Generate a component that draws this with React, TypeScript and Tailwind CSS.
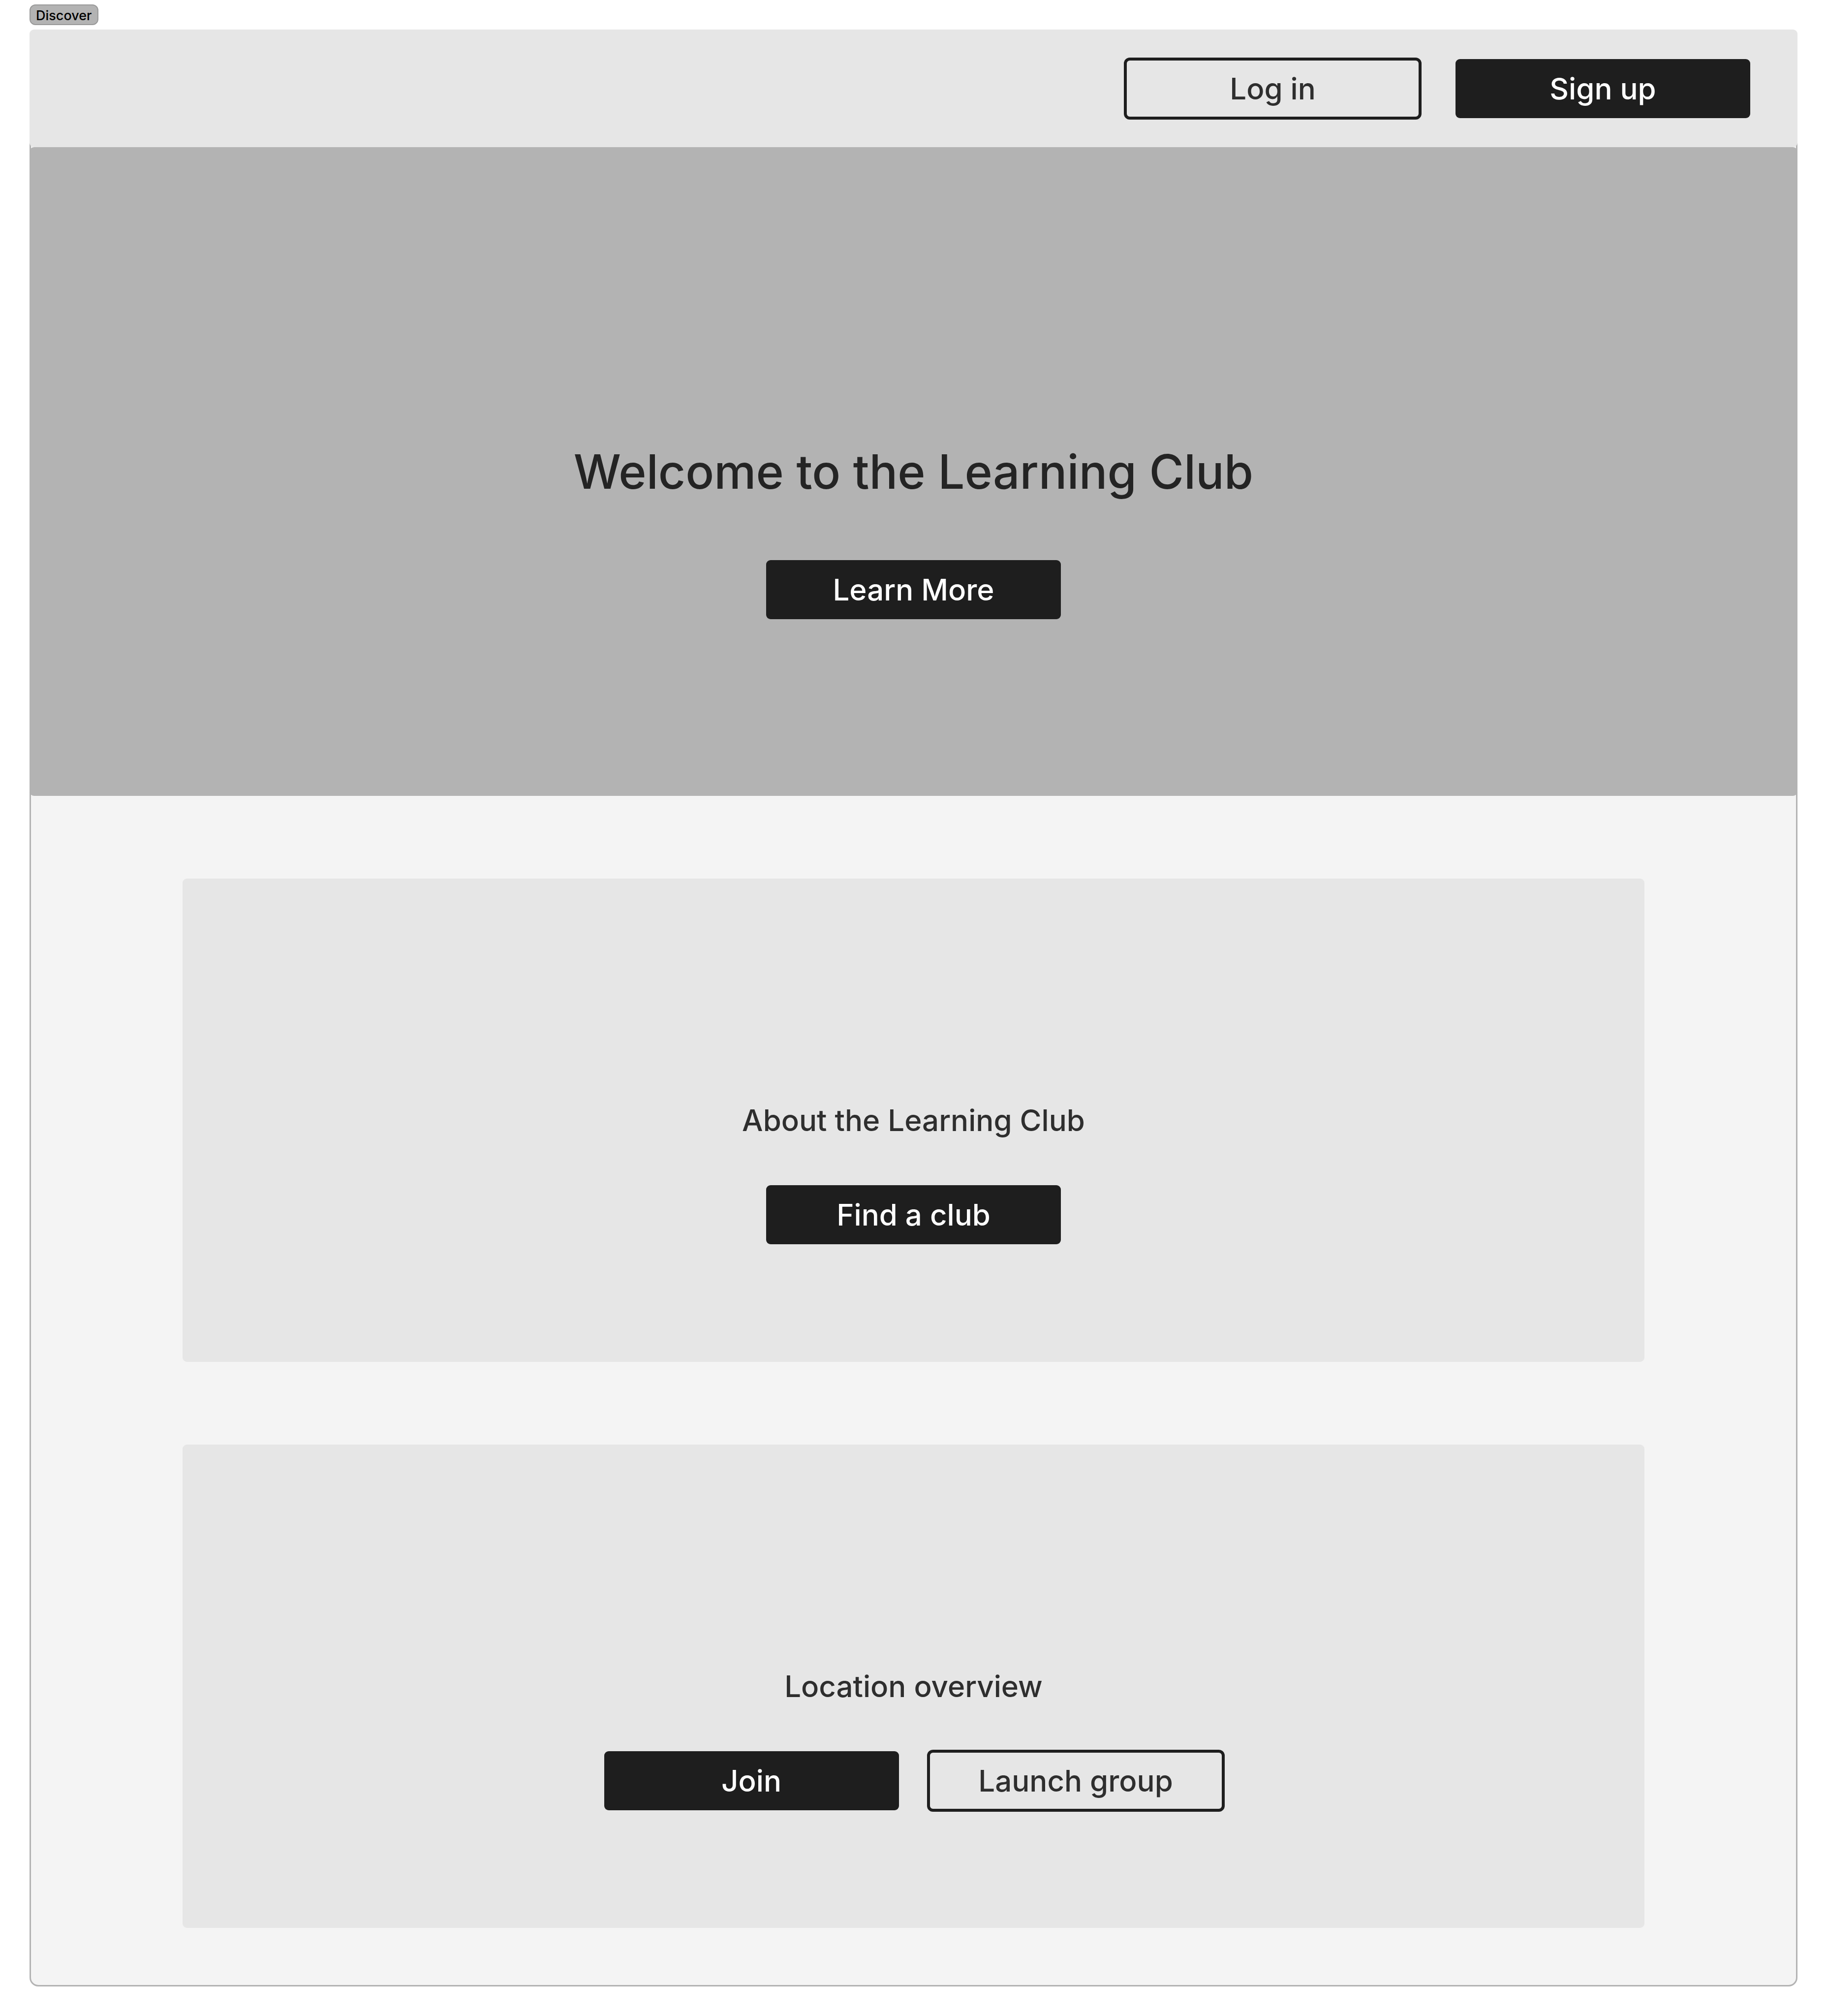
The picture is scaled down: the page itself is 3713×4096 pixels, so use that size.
import type { ReactNode } from "react";

type ActionProps = {
  children: ReactNode;
  variant?: "solid" | "outline";
};

function Action({ children, variant = "solid" }: ActionProps) {
  const look =
    variant === "solid"
      ? "bg-[#1e1e1e] text-white"
      : "text-[#2e2e2e] outline-6 -outline-offset-3 outline-[#1e1e1e]";
  return (
    <button
      type="button"
      className={`h-[120px] w-full max-w-[599px] rounded-[9px] text-[60px] leading-[72px] font-medium ${look}`}
    >
      {children}
    </button>
  );
}

type CardProps = {
  title: string;
  children: ReactNode;
};

function Card({ title, children }: CardProps) {
  return (
    <section className="grid min-h-[982px] grid-rows-[1fr_auto_1fr] rounded-[9px] bg-[#e6e6e6]">
      <h2 className="row-start-2 text-center text-[60px] leading-[72px] font-medium text-[#2e2e2e]">
        {title}
      </h2>
      <div className="row-start-3 flex justify-center gap-15 pt-24">
        {children}
      </div>
    </section>
  );
}

export default function App() {
  return (
    <div className="min-h-screen bg-white px-15 pt-[9px] pb-15 font-['Inter',sans-serif]">
      <div className="mb-[9px] flex h-[42px] w-fit items-center rounded-[12px] border-2 border-[#999999] bg-[#b3b3b3] px-[11px] pt-1 text-[27px] leading-[32px] font-medium text-black">
        Discover
      </div>
      <main className="rounded-[18px] border-3 border-[#b3b3b3] bg-[#f4f4f4]">
        <header className="-mx-[3px] -mt-[3px] flex h-[239px] items-center justify-end gap-18 rounded-[9px] bg-[#e6e6e6] px-24">
          <Action variant="outline">Log in</Action>
          <Action>Sign up</Action>
        </header>
        <section className="-mx-[3px] grid min-h-[1318px] grid-rows-[1fr_auto_1fr] rounded-[9px] bg-[#b3b3b3]">
          <h1 className="row-start-2 text-center text-[96px] leading-[120px] font-medium text-[#242424]">
            Welcome to the Learning Club
          </h1>
          <div className="row-start-3 flex justify-center pt-30">
            <Action>Learn More</Action>
          </div>
        </section>
        <div className="flex flex-col gap-42 px-77 pt-42 pb-29">
          <Card title="About the Learning Club">
            <Action>Find a club</Action>
          </Card>
          <Card title="Location overview">
            <Action>Join</Action>
            <Action variant="outline">Launch group</Action>
          </Card>
        </div>
      </main>
    </div>
  );
}
